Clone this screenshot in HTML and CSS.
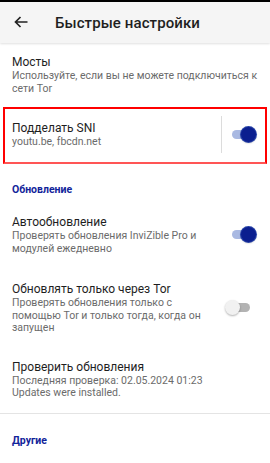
FILE: index.html
```html
<!DOCTYPE html>
<html lang="ru">
<head>
<meta charset="utf-8">
<link rel="stylesheet" href="styles.css">
</head>
<body>
<div class="statusbar"></div>
<header class="toolbar">
  <svg class="back" width="14" height="12" viewBox="0 0 14 12"><path d="M13.5 6H1.5M6.5 1L1.5 6l5 5" fill="none" stroke="#222" stroke-width="1.7"/></svg>
  <span class="toolbar-title">Быстрые настройки</span>
</header>
<main class="list">
  <section class="pref pref-first">
    <div class="pref-text">
      <div class="pref-title">Мосты</div>
      <div class="pref-summary">Используйте, если вы не можете подключиться к сети Tor</div>
    </div>
  </section>
  <section class="pref pref-highlight">
    <div class="pref-text">
      <div class="pref-title">Подделать SNI</div>
      <div class="pref-summary">youtu.be, fbcdn.net</div>
    </div>
    <div class="vdivider"></div>
    <div class="switch on"><span class="track"></span><span class="thumb"></span></div>
  </section>
  <div class="category">Обновление</div>
  <section class="pref">
    <div class="pref-text">
      <div class="pref-title">Автообновление</div>
      <div class="pref-summary">Проверять обновления InviZible Pro и модулей ежедневно</div>
    </div>
    <div class="switch on"><span class="track"></span><span class="thumb"></span></div>
  </section>
  <section class="pref">
    <div class="pref-text">
      <div class="pref-title">Обновлять только через Tor</div>
      <div class="pref-summary">Проверять обновления только с помощью Tor и только тогда, когда он запущен</div>
    </div>
    <div class="switch off"><span class="track"></span><span class="thumb"></span></div>
  </section>
  <section class="pref pref-last">
    <div class="pref-text">
      <div class="pref-title">Проверить обновления</div>
      <div class="pref-summary">Последняя проверка: 02.05.2024 01:23<br>Updates were installed.</div>
    </div>
  </section>
  <div class="hdivider"></div>
  <div class="category">Другие</div>
</main>
</body>
</html>
```

FILE: styles.css
```css
* { box-sizing: border-box; }
html, body { margin: 0; padding: 0; }
body {
  width: 270px;
  height: 463px;
  overflow: hidden;
  background: #fff;
  font-family: Roboto, "Noto Sans", sans-serif;
  color: #212121;
}
.statusbar { height: 2px; background: #000; }
.toolbar {
  height: 41px;
  background: #f5f5f5;
  display: flex;
  align-items: center;
  padding-left: 14px;
  box-shadow: 0 1px 2px rgba(0,0,0,0.12);
  position: relative;
  z-index: 1;
}
.back { display: block; margin-top: -2px; }
.toolbar-title {
  margin-left: 27px;
  font-size: 15px;
  font-weight: 500;
  color: #1f1f1f;
  letter-spacing: 0.1px;
}
.list { display: flex; flex-direction: column; }
.pref {
  display: flex;
  align-items: center;
  padding: 13px 14px 13px 12px;
}
.pref-first { padding: 11px 4px 12px 12px; }
.pref-last { padding: 11px 4px 13px 12px; }
.pref-text { flex: 1; min-width: 0; }
.pref-title {
  font-size: 12px;
  line-height: 16px;
  color: #1e1e1e;
}
.pref-summary {
  font-size: 10.5px;
  line-height: 12.5px;
  color: #6b6b6b;
  padding-right: 18px;
}
.pref-first .pref-summary, .pref-last .pref-summary { padding-right: 0; }
.pref-highlight {
  margin: 0 3px;
  border: 2px solid #f00;
  border-bottom-color: #f55;
  padding: 7px 9px 9px 7px;
}
.pref-highlight .pref-summary { padding-right: 0; }
.vdivider {
  width: 1px;
  height: 37px;
  background: #dcdcdc;
  margin: 0 9px 0 0;
}
.switch {
  position: relative;
  width: 25px;
  height: 15px;
  flex: none;
}
.switch .track {
  position: absolute;
  left: 1px;
  top: 3px;
  width: 20px;
  height: 9px;
  border-radius: 5px;
}
.switch .thumb {
  position: absolute;
  top: 0;
  width: 15px;
  height: 15px;
  border-radius: 50%;
}
.switch.on .track { background: #a9b9e2; }
.switch.on .thumb {
  left: 10px;
  background: #0b1f8f;
  box-shadow: 0 0 0 1px #2a45a8, 0 1px 2px rgba(0,0,0,0.3);
}
.switch.off { margin-right: 6px; width: 25px; }
.switch.off .track { background: #b3b3b3; left: 5px; width: 20px; }
.switch.off .thumb {
  left: 0;
  background: #f1f1f1;
  box-shadow: 0 1px 2px rgba(0,0,0,0.3);
}
.category {
  padding: 0 12px;
  font-size: 10.5px;
  line-height: 13px;
  font-weight: 700;
  color: #12249a;
  margin: 19px 0 5px;
}
.hdivider { height: 1px; background: #e4e4e4; margin-top: 0; }
.hdivider + .category { margin-top: 20px; }
```
